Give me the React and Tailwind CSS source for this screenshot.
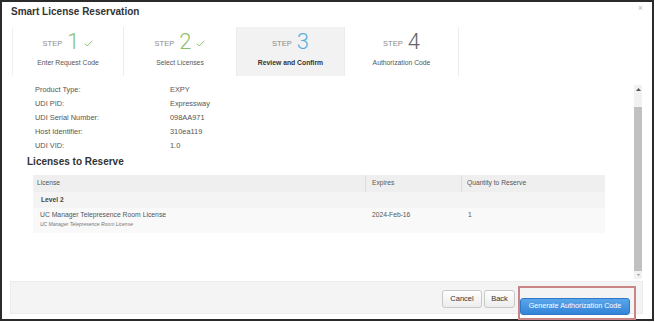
import React from "react";

function Check() {
  return (
    <svg width="9" height="7" viewBox="0 0 9 7" className="mt-[3px]">
      <polyline points="0.8,3.6 3.2,6 8.4,0.8" fill="none" stroke="#8cbf6a" strokeWidth="1" />
    </svg>
  );
}

function Step({ n, label, color, done, active, w }) {
  return (
    <div
      className={`flex flex-col items-center border-r border-[#ececec] pt-[4px] ${active ? "bg-[#f2f2f2]" : ""}`}
      style={{ width: w }}
    >
      <div className="flex items-center h-[22px] gap-[5px]">
        <span className="text-[7.5px] text-[#8a8a8a] mt-[3px]">STEP</span>
        <span
          className="font-['Roboto',sans-serif] font-light text-[22px] leading-[22px]"
          style={{ color }}
        >
          {n}
        </span>
        {done && <Check />}
      </div>
      <div className={`mt-[6px] text-[6.8px] leading-[8px] ${active ? "font-bold text-[#333]" : "text-[#555]"}`}>
        {label}
      </div>
    </div>
  );
}

export default function App() {
  const info = [
    ["Product Type:", "EXPY"],
    ["UDI PID:", "Expressway"],
    ["UDI Serial Number:", "098AA971"],
    ["Host Identifier:", "310ea119"],
    ["UDI VID:", "1.0"],
  ];
  return (
    <div className="w-[655px] h-[322px] bg-white font-['Liberation_Sans',Arial,sans-serif]">
      <div className="relative w-[654px] h-[321px] border-2 border-[#2b2b2b] flex flex-col">
        <div className="h-[25px] pl-[9px] pt-[4px] text-[10px] leading-[12px] font-bold text-[#333]">
          Smart License Reservation
        </div>
        <span className="absolute top-[0px] right-[9px] text-[9px] text-[#bbb]">×</span>

        <div className="flex h-[49px] ml-[10px]">
          <div className="border-l border-[#f0f0f0]" />
          <Step n="1" label="Enter Request Code" color="#8cbf6a" done w={111} />
          <Step n="2" label="Select Licenses" color="#8cbf6a" done w={113} />
          <Step n="3" label="Review and Confirm" color="#55ade0" active w={108} />
          <Step n="4" label="Authorization Code" color="#666" w={114} />
        </div>

        <div className="flex h-[205px]">
          <div className="flex-1 pt-[7px]">
            <div className="pl-[33px] text-[7.4px] text-[#555]">
              {info.map(([k, v]) => (
                <div key={k} className="flex h-[14px] items-center">
                  <span className="w-[135px]">{k}</span>
                  <span>{v}</span>
                </div>
              ))}
            </div>
            <div className="pl-[25px] mt-[3px] h-[12px] text-[10px] leading-[12px] font-bold text-[#333]">
              Licenses to Reserve
            </div>
            <div className="ml-[31px] mt-[7px] w-[572px] text-[6.7px] text-[#555]">
              <div className="flex h-[17px] bg-[#efefef] items-center">
                <div className="w-[333px] pl-[4px] h-full flex items-center border-r border-[#dedede]">License</div>
                <div className="w-[96px] pl-[6px] h-full flex items-center border-r border-[#dedede]">Expires</div>
                <div className="flex-1 pl-[5px]">Quantity to Reserve</div>
              </div>
              <div className="flex h-[16px] bg-[#f4f4f4] items-center pl-[8px] font-bold text-[#444]">Level 2</div>
              <div className="flex h-[25px] bg-[#f9f9f9]">
                <div className="w-[333px] pl-[7px] pt-[2px]">
                  <div className="text-[6.8px] leading-[9px] text-[#555]">UC Manager Telepresence Room License</div>
                  <div className="text-[5px] leading-[8px] italic text-[#777] mt-[1px]">UC Manager Telepresence Room License</div>
                </div>
                <div className="w-[96px] pl-[6px] pt-[2px] leading-[9px]">2024-Feb-16</div>
                <div className="flex-1 pl-[6px] pt-[2px] leading-[9px]">1</div>
              </div>
            </div>
          </div>
          <div className="w-[8px] mr-[10px] mt-[9px] mb-[2px] flex flex-col bg-[#f1f1f1]">
            <div className="h-[22px] flex justify-center pt-[3px]">
              <svg width="5" height="3" viewBox="0 0 5 3"><polygon points="0,3 2.5,0 5,3" fill="#555" /></svg>
            </div>
            <div className="flex-1 bg-[#c1c1c1]" />
            <div className="h-[8px] flex justify-center items-center">
              <svg width="3" height="2" viewBox="0 0 3 2"><polygon points="0,0 3,0 1.5,2" fill="#999" /></svg>
            </div>
          </div>
        </div>

        <div className="ml-[8px] mr-[9px] h-[33px] bg-[#f4f4f4] border border-[#ececec] flex items-start justify-end pt-[4px] pr-[6px] gap-[2px]">
          <button className="mt-[4px] h-[18px] w-[40px] rounded-[3px] border border-[#c8c8c8] bg-gradient-to-b from-white to-[#ececec] text-[7.5px] text-[#333]">
            Cancel
          </button>
          <button className="mt-[4px] h-[18px] w-[31px] rounded-[3px] border border-[#c8c8c8] bg-gradient-to-b from-white to-[#ececec] text-[7.5px] text-[#333]">
            Back
          </button>
          <div className="ml-[1px] border-2 border-[#c98585] pt-[3px] pb-[3px] pr-[4px]">
            <button className="h-[17px] w-[110px] rounded-[3px] border border-[#2f78c8] bg-gradient-to-b from-[#5aa6ea] to-[#3284d8] text-[7.2px] text-white">
              Generate Authorization Code
            </button>
          </div>
        </div>
      </div>
    </div>
  );
}
